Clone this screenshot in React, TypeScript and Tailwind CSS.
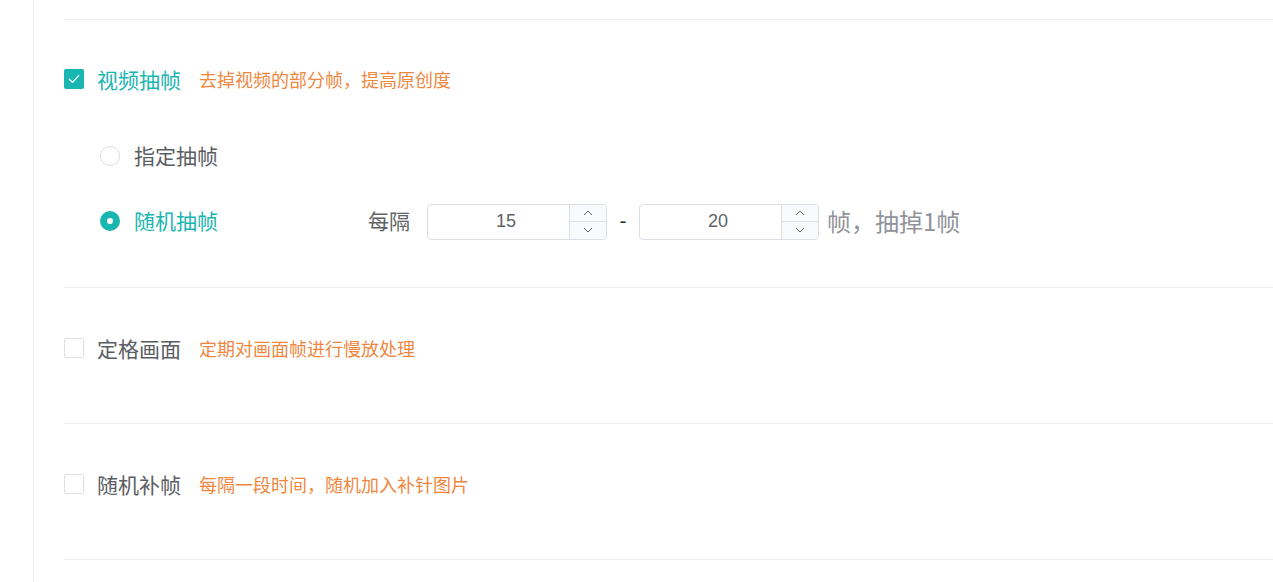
import { useState } from "react";

const cjk = { fontFamily: '"Noto Sans CJK SC", "Noto Sans", sans-serif' };
const num = { fontFamily: '"Liberation Sans", Arial, sans-serif' };

function Checkbox({ checked }: { checked: boolean }) {
  return checked ? (
    <span className="flex h-5 w-5 shrink-0 items-center justify-center rounded-[2px] bg-[#19b5b1]">
      <svg width="12" height="10" viewBox="0 0 12 10" fill="none">
        <path d="M1.3 5.2 L4.6 8.4 L10.7 1.6" stroke="white" strokeWidth="1.3" strokeLinecap="round" strokeLinejoin="round" />
      </svg>
    </span>
  ) : (
    <span className="h-5 w-5 shrink-0 rounded-[2px] border border-[#dcdfe6] bg-white" />
  );
}

function Radio({ checked }: { checked: boolean }) {
  return checked ? (
    <span className="flex h-5 w-5 shrink-0 items-center justify-center rounded-full bg-[#19b5b1]">
      <span className="h-[6px] w-[6px] rounded-full bg-white" />
    </span>
  ) : (
    <span className="h-5 w-5 shrink-0 rounded-full border border-[#dcdfe6] bg-white" />
  );
}

function NumberBox({ value, onChange }: { value: number; onChange: (v: number) => void }) {
  return (
    <div className="flex h-[36px] w-[180px] overflow-hidden rounded-[4px] border border-[#dcdfe6] bg-white">
      <div className="flex flex-1 items-center justify-center pl-[15px] text-[18px] text-[#606266]" style={num}>
        {value}
      </div>
      <div className="flex w-[37px] flex-col border-l border-[#dcdfe6] bg-[#f9fafc]">
        <button type="button" className="flex flex-1 items-center justify-center border-b border-[#dcdfe6]" onClick={() => onChange(value + 1)}>
          <svg width="10" height="6" viewBox="0 0 10 6" fill="none">
            <path d="M1 5 L5 1 L9 5" stroke="#606266" strokeWidth="1" />
          </svg>
        </button>
        <button type="button" className="flex flex-1 items-center justify-center" onClick={() => onChange(value - 1)}>
          <svg width="10" height="6" viewBox="0 0 10 6" fill="none">
            <path d="M1 1 L5 5 L9 1" stroke="#606266" strokeWidth="1" />
          </svg>
        </button>
      </div>
    </div>
  );
}

function OptionRow({ checked, label, desc }: { checked: boolean; label: string; desc: string }) {
  return (
    <div className="flex h-5 items-center">
      <Checkbox checked={checked} />
      <span className={`ml-[13px] text-[21px] leading-none ${checked ? "text-[#19b5b1]" : "text-[#5a5d62]"}`}>{label}</span>
      <span className="ml-[18px] text-[18px] leading-none text-[#f0873f]">{desc}</span>
    </div>
  );
}

export default function App() {
  const [from, setFrom] = useState(15);
  const [to, setTo] = useState(20);

  return (
    <div className="flex min-h-screen bg-white" style={cjk}>
      <div className="w-[33px] shrink-0" />
      <div className="flex-1 border-l border-[#ebeef5] pl-[30px] pt-[19px]">
        <section className="border-t border-[#ebeef5] pt-[49px] pb-[46px]">
          <OptionRow checked label="视频抽帧" desc="去掉视频的部分帧，提高原创度" />
          <div className="pl-[36px]">
            <div className="mt-[47px] flex h-10 items-center">
              <Radio checked={false} />
              <span className="ml-[14px] text-[21px] text-[#5a5d62]">指定抽帧</span>
            </div>
            <div className="mt-[25px] flex h-10 items-center">
              <Radio checked />
              <span className="ml-[14px] w-[234px] text-[21px] text-[#19b5b1]">随机抽帧</span>
              <span className="text-[21px] text-[#606266]">每隔</span>
              <span className="ml-[17px] pt-[1px]">
                <NumberBox value={from} onChange={setFrom} />
              </span>
              <span className="w-[32px] text-center text-[21px] text-[#303133]" style={num}>-</span>
              <span className="pt-[1px]">
                <NumberBox value={to} onChange={setTo} />
              </span>
              <span className="ml-[8px] text-[24px] text-[#909399]">帧，抽掉1帧</span>
            </div>
          </div>
        </section>
        <section className="border-t border-[#ebeef5] pt-[50px] pb-[65px]">
          <OptionRow checked={false} label="定格画面" desc="定期对画面帧进行慢放处理" />
        </section>
        <section className="border-t border-[#ebeef5] pt-[50px] pb-[65px]">
          <OptionRow checked={false} label="随机补帧" desc="每隔一段时间，随机加入补针图片" />
        </section>
        <div className="border-t border-[#ebeef5] h-[30px]" />
      </div>
    </div>
  );
}
